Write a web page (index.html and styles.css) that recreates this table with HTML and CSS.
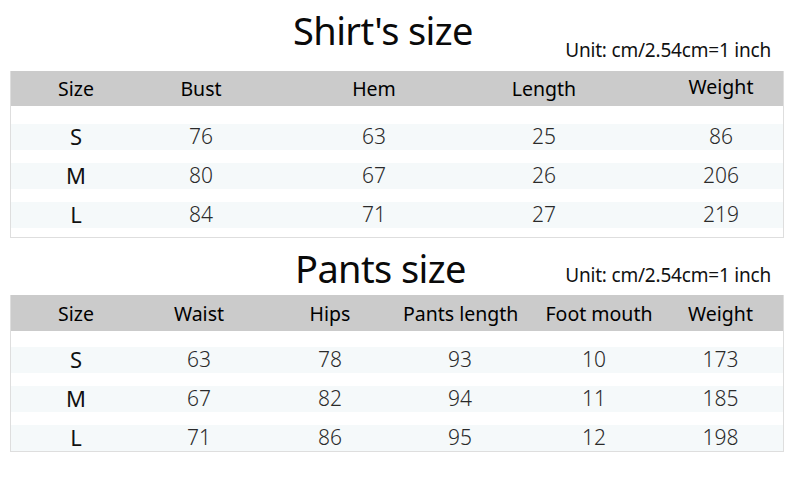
FILE: index.html
```html
<!DOCTYPE html>
<html>
<head>
<meta charset="utf-8">
<link rel="stylesheet" href="styles.css">
</head>
<body>
<div class="page">
  <section class="chart shirt">
    <div class="title-row">
      <h1 class="title">Shirt's size</h1>
      <span class="unit">Unit: cm/2.54cm=1 inch</span>
    </div>
    <div class="table">
      <div class="row head">
        <span>Size</span><span>Bust</span><span>Hem</span><span>Length</span><span class="hi">Weight</span>
      </div>
      <div class="body">
        <div class="row"><span class="sz">S</span><span>76</span><span>63</span><span>25</span><span>86</span></div>
        <div class="row"><span class="sz">M</span><span>80</span><span>67</span><span>26</span><span>206</span></div>
        <div class="row"><span class="sz">L</span><span>84</span><span>71</span><span>27</span><span>219</span></div>
      </div>
    </div>
  </section>
  <section class="chart pants">
    <div class="title-row">
      <h1 class="title">Pants size</h1>
      <span class="unit">Unit: cm/2.54cm=1 inch</span>
    </div>
    <div class="table">
      <div class="row head">
        <span>Size</span><span>Waist</span><span>Hips</span><span>Pants length</span><span class="fm">Foot mouth</span><span>Weight</span>
      </div>
      <div class="body">
        <div class="row"><span class="sz">S</span><span>63</span><span>78</span><span>93</span><span>10</span><span>173</span></div>
        <div class="row"><span class="sz">M</span><span>67</span><span>82</span><span>94</span><span>11</span><span>185</span></div>
        <div class="row"><span class="sz">L</span><span>71</span><span>86</span><span>95</span><span>12</span><span>198</span></div>
      </div>
    </div>
  </section>
</div>
</body>
</html>
```

FILE: styles.css
```css
html, body {
  margin: 0;
  padding: 0;
  background: #ffffff;
}
body {
  width: 800px;
  height: 487px;
  overflow: hidden;
  font-family: "Noto Sans", "Open Sans", sans-serif;
  color: #111;
}
.page {
  display: flex;
  flex-direction: column;
}
.title-row {
  display: flex;
  align-items: flex-end;
  padding: 0 29px 0 293px;
}
.shirt .title-row {
  height: 71px;
}
.pants .title-row {
  height: 57px;
  padding-left: 295px;
}
.title {
  margin: 0;
  font-weight: 400;
  font-size: 38px;
  line-height: 1;
  letter-spacing: -0.6px;
  color: #0a0a0a;
}
.shirt .title {
  margin-bottom: 22px;
}
.pants .title {
  margin-bottom: 8px;
}
.unit {
  margin-left: auto;
  font-size: 19px;
  line-height: 1;
  color: #111;
  letter-spacing: -0.2px;
}
.shirt .unit {
  margin-bottom: 11px;
}
.pants .unit {
  margin-bottom: 10px;
}
.table {
  margin-left: 10px;
  width: 772px;
  border: 1px solid #dedede;
  border-top: none;
}
.row {
  display: grid;
  align-items: center;
  text-align: center;
  white-space: nowrap;
}
.shirt .row {
  grid-template-columns: 130px 120px 226px 114px 1fr;
}
.shirt .row > span:nth-child(5) {
  padding-left: 58px;
}
.pants .row {
  grid-template-columns: 130px 116px 146px 114px 154px 1fr;
}
.pants .row > span:nth-child(6) {
  padding-right: 13px;
}
.head {
  background: #cbcbcb;
  font-size: 19.5px;
  color: #000;
}
.shirt .head {
  height: 35px;
}
.pants .head {
  height: 36px;
}
.head .hi {
  margin-top: -5px;
}
.head .fm {
  padding-left: 10px;
}
.body {
  display: flex;
  flex-direction: column;
  gap: 13px;
}
.shirt .body {
  padding: 18px 0 9px;
}
.pants .body {
  padding: 16px 0 0;
}
.body .row {
  height: 26px;
  box-sizing: border-box;
  padding-bottom: 1px;
  line-height: 25px;
  background: #f5f9fa;
  font-size: 21px;
  font-weight: 300;
  color: #2a2a2a;
}
.body .row .sz {
  font-weight: 400;
  font-size: 22px;
  color: #111;
}
```
